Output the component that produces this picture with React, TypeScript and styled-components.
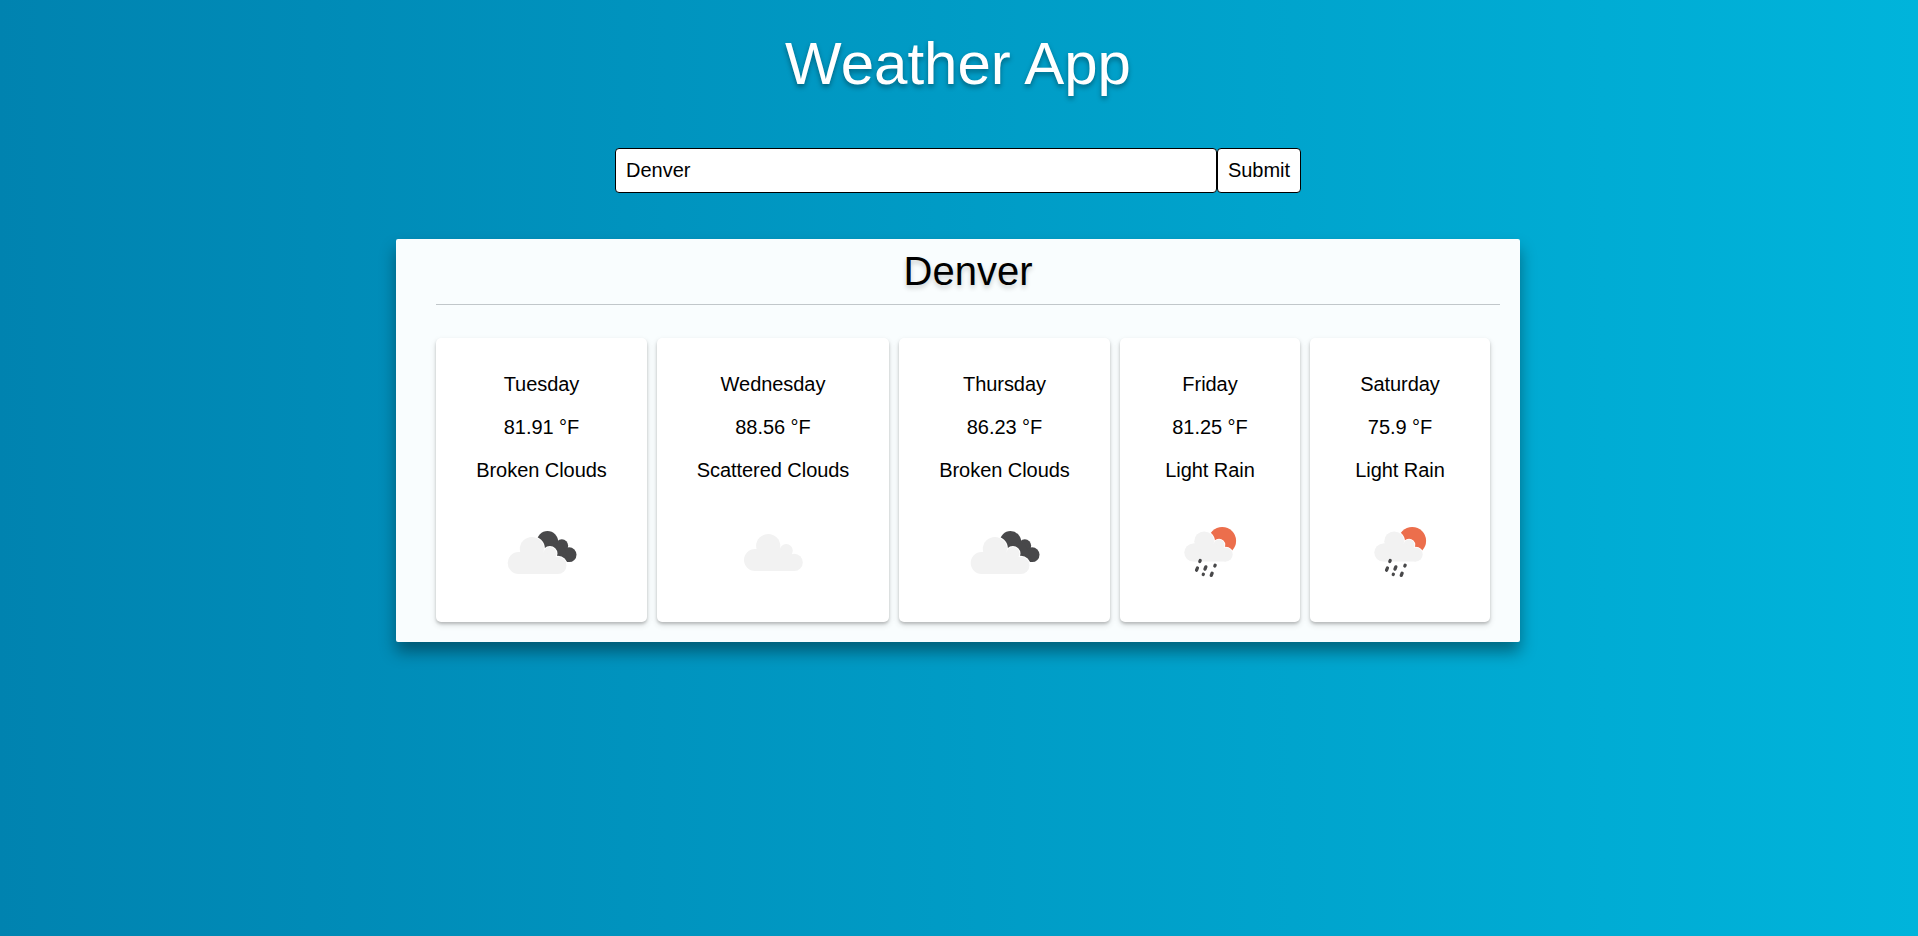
import React from 'react';
import styled, { createGlobalStyle } from 'styled-components';

const GlobalStyle = createGlobalStyle`
  *, *::before, *::after { box-sizing: border-box; }
  body {
    margin: 0;
    min-height: 100vh;
    font-family: Arial, 'Liberation Sans', sans-serif;
    font-size: 20px;
    color: #000;
    background: linear-gradient(to right, #0083b0, #00b4db);
  }
`;

const Page = styled.main`
  display: flex;
  flex-direction: column;
  align-items: center;
  padding: 29px 2px 0 0;
`;

const Title = styled.h1`
  margin: 0 0 50px;
  font-size: 60px;
  font-weight: 400;
  line-height: 69px;
  color: #fff;
  text-shadow: 0 3px 5px rgba(0, 0, 0, 0.35);
`;

const SearchForm = styled.form`
  display: flex;
  height: 45px;
  margin-bottom: 46px;
`;

const SearchInput = styled.input`
  width: 602px;
  padding: 0 10px;
  border: 1px solid #000;
  border-radius: 4px;
  background: #fff;
  color: #000;
  font: inherit;
  outline: none;
`;

const SubmitButton = styled.button`
  width: 84px;
  padding: 0;
  border: 1px solid #000;
  border-radius: 4px;
  background: #fff;
  color: #000;
  font: inherit;
`;

const Panel = styled.section`
  width: 1124px;
  padding: 10px 20px 20px 40px;
  border-radius: 2px;
  background: #f9fdfe;
  box-shadow: 0 10px 16px rgba(0, 0, 0, 0.38);
`;

const City = styled.h2`
  margin: 0 0 33px;
  padding-bottom: 11px;
  border-bottom: 1px solid #c1c7ca;
  font-size: 40px;
  font-weight: 400;
  line-height: 44px;
  text-align: center;
  text-shadow: 0 3px 5px rgba(0, 0, 0, 0.2);
`;

const Forecast = styled.ul`
  display: flex;
  gap: 10px;
  margin: 0;
  padding: 0;
  list-style: none;
`;

const DayCard = styled.li<{ $width: number }>`
  display: flex;
  flex: none;
  flex-direction: column;
  align-items: center;
  gap: 20px;
  width: ${({ $width }) => $width}px;
  height: 284px;
  padding-top: 35px;
  border-radius: 5px;
  background: #fff;
  box-shadow: 0 3px 6px rgba(0, 0, 0, 0.13), 0 2px 3px rgba(0, 0, 0, 0.18);
`;

const Line = styled.span`
  line-height: 23px;
  letter-spacing: -0.05px;
  white-space: nowrap;
`;

const Icon = styled.svg`
  display: block;
  width: 100px;
  height: 100px;
`;

type Sky = 'broken' | 'scattered' | 'rain';

function CloudShape() {
  return (
    <>
      <circle cx="32" cy="58" r="11" />
      <circle cx="45.2" cy="44.1" r="12.1" />
      <circle cx="63.2" cy="48.6" r="6.6" />
      <circle cx="71.2" cy="60.4" r="8.6" />
      <path d="M32 69V47H56L69 52L72 60V69Z" />
    </>
  );
}

function Cloud({ transform }: { transform?: string }) {
  return (
    <g transform={transform}>
      <g fill="#fff" stroke="#fff" strokeWidth="2">
        <CloudShape />
      </g>
      <g fill="#f2f2f2">
        <CloudShape />
      </g>
    </g>
  );
}

const DROPS = [
  [40, 59, 0.5],
  [37, 67.1, 1.1],
  [45.4, 66, 1.1],
  [55, 63.6, 0.4],
  [43.3, 72.4, 0.1],
  [51.7, 72.3, 1.1],
];

function SkyIcon({ sky }: { sky: Sky }) {
  return (
    <Icon viewBox="0 0 100 100" aria-hidden="true">
      {sky === 'broken' && (
        <>
          <g fill="#48484a">
            <circle cx="55.5" cy="39.8" r="10.7" />
            <circle cx="69.8" cy="43.7" r="6.4" />
            <circle cx="77.1" cy="52.7" r="7.4" />
            <path d="M56 40L70 42L78 60H62Z" />
          </g>
          <Cloud transform="translate(-5.3 3)" />
        </>
      )}
      {sky === 'scattered' && <Cloud />}
      {sky === 'rain' && (
        <>
          <circle cx="62.2" cy="38.8" r="13.9" fill="#ec6e4c" />
          <Cloud transform="translate(7 3.3) scale(.823 .815)" />
          <g stroke="#48484a" strokeWidth="3.3" strokeLinecap="round">
            {DROPS.map(([x, y, h]) => (
              <line key={x} x1={x + h * 0.4} y1={y - h} x2={x - h * 0.4} y2={y + h} />
            ))}
          </g>
        </>
      )}
    </Icon>
  );
}

const DAYS: { day: string; temp: string; text: string; sky: Sky; width: number }[] = [
  { day: 'Tuesday', temp: '81.91', text: 'Broken Clouds', sky: 'broken', width: 211 },
  { day: 'Wednesday', temp: '88.56', text: 'Scattered Clouds', sky: 'scattered', width: 232 },
  { day: 'Thursday', temp: '86.23', text: 'Broken Clouds', sky: 'broken', width: 211 },
  { day: 'Friday', temp: '81.25', text: 'Light Rain', sky: 'rain', width: 180 },
  { day: 'Saturday', temp: '75.9', text: 'Light Rain', sky: 'rain', width: 180 },
];

export default function App() {
  return (
    <>
      <GlobalStyle />
      <Page>
        <Title>Weather App</Title>
        <SearchForm onSubmit={(e) => e.preventDefault()}>
          <SearchInput defaultValue="Denver" aria-label="City" />
          <SubmitButton type="submit">Submit</SubmitButton>
        </SearchForm>
        <Panel>
          <City>Denver</City>
          <Forecast>
            {DAYS.map(({ day, temp, text, sky, width }) => (
              <DayCard key={day} $width={width}>
                <Line>{day}</Line>
                <Line>{temp} °F</Line>
                <Line>{text}</Line>
                <SkyIcon sky={sky} />
              </DayCard>
            ))}
          </Forecast>
        </Panel>
      </Page>
    </>
  );
}
